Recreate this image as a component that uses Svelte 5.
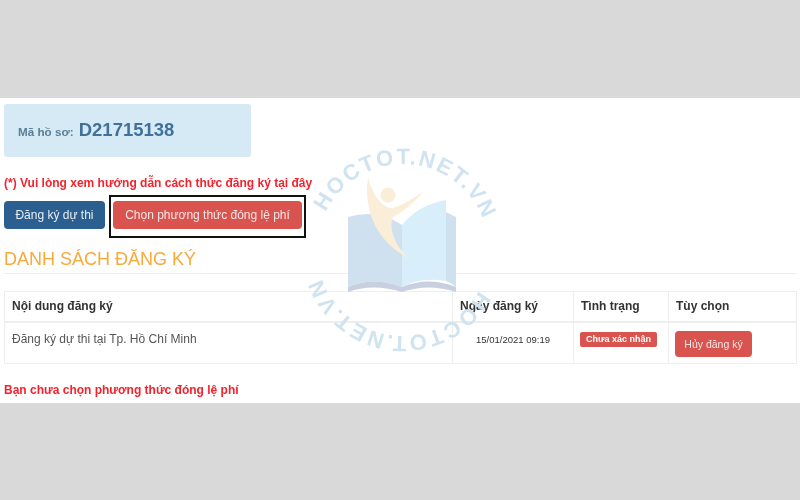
<script>
  const rows = [{ name: 'Đăng ký dự thi tại Tp. Hồ Chí Minh', date: '15/01/2021 09:19', status: 'Chưa xác nhận', action: 'Hủy đăng ký' }];
</script>

<div class="page">
  <main class="panel">
    <div class="content">
      <div class="alert"><span class="label">Mã hồ sơ:</span> <strong>D21715138</strong></div>
      <p class="guide">(*) Vui lòng xem hướng dẫn cách thức đăng ký tại đây</p>
      <div class="actions">
        <button class="btn blue">Đăng ký dự thi</button>
        <div class="focus"><button class="btn red wide">Chọn phương thức đóng lệ phí</button></div>
      </div>
      <h2>DANH SÁCH ĐĂNG KÝ</h2>
      <table>
        <thead>
          <tr><th class="c1">Nội dung đăng ký</th><th class="c2">Ngày đăng ký</th><th class="c3">Tình trạng</th><th>Tùy chọn</th></tr>
        </thead>
        <tbody>
          {#each rows as r}
            <tr>
              <td>{r.name}</td>
              <td class="date">{r.date}</td>
              <td><span class="badge">{r.status}</span></td>
              <td><button class="btn red small">{r.action}</button></td>
            </tr>
          {/each}
        </tbody>
      </table>
      <p class="warn">Bạn chưa chọn phương thức đóng lệ phí</p>
    </div>

    <svg class="mark" viewBox="0 0 220 220" width="220" height="220" aria-hidden="true">
      <defs>
        <path id="arcTop" d="M 24 110 A 86 86 0 0 1 196 110" />
        <path id="arcBot" d="M 196 110 A 86 86 0 0 1 24 110" />
      </defs>
      <path d="M55 77 Q85 68 109 85 L109 147 Q80 136 55 147 Z" fill="#cfe0ef" />
      <path d="M109 85 Q125 65 153 60 L153 141 Q128 137 109 147 Z" fill="#d8eefa" />
      <path d="M153 72 L163 77 L163 147 Q158 143 153 141 Z" fill="#cfe0ef" />
      <path d="M75 38 C70 72 85 102 115 118 C102 105 95 88 100 77 C110 72 122 62 131 51 C118 60 105 68 97 68 C88 66 80 55 75 38 Z" fill="#fbeed8" />
      <circle cx="95" cy="55" r="7.5" fill="#fbeed8" />
      <path d="M55 147 Q80 136 109 147 Q135 136 163 147 L163 152 Q135 143 109 152 Q80 143 55 152 Z" fill="#c8cfdf" />
      <g transform="rotate(3 110 110)">
        <text class="wm"><textPath href="#arcTop" startOffset="50%" text-anchor="middle">HOCTOT.NET.VN</textPath></text>
      </g>
      <g transform="rotate(5 110 110)">
        <text class="wm"><textPath href="#arcBot" startOffset="50%" text-anchor="middle">HOCTOT.NET.VN</textPath></text>
      </g>
    </svg>
  </main>
</div>

<style>
  :global(body) { margin: 0; background: #d9d9d9; }
  .page { width: 800px; height: 500px; padding-top: 98px; box-sizing: border-box; overflow: hidden; font-family: "Liberation Sans", Arial, sans-serif; }
  .panel { position: relative; height: 305px; background: #fff; }
  .content { padding: 6px 3px 0 4px; filter: blur(0.6px); }
  .alert { width: 247px; height: 53px; box-sizing: border-box; padding-left: 14px; display: flex; align-items: center; gap: 5px; background: #d6eaf5; border-radius: 3px; }
  .label { font-size: 11.7px; font-weight: bold; padding-top: 2px; color: #5a8099; }
  .alert strong { font-size: 18.5px; color: #40719a; margin-top: -2px; }
  .guide { margin: 19px 0 0; font-size: 12px; line-height: 14px; font-weight: bold; color: #f5222d; }
  .actions { display: flex; align-items: flex-start; gap: 4px; margin-top: 5px; }
  .btn { border: 0; border-radius: 4px; color: #f3e6e6; font: 12px "Liberation Sans", Arial, sans-serif; padding: 0; }
  .blue { width: 101px; height: 28px; margin-top: 6px; background: #2a5f90; color: #e6edf3; }
  .red { background: #d9534f; }
  .focus { border: 2px solid #111; padding: 4px 2px 7px; display: flex; }
  .wide { width: 189px; height: 28px; }
  h2 { margin: 8px 0 0; padding-bottom: 1px; border-bottom: 1px solid #eee; font-size: 18px; line-height: 26px; font-weight: normal; color: #f9a83a; }
  table { width: 793px; margin-top: 17px; border-collapse: collapse; table-layout: fixed; font-size: 12px; color: #555; }
  th, td { border: 1px solid #eee; padding: 7px; text-align: left; vertical-align: top; }
  th { height: 14px; padding-bottom: 8px; line-height: 14px; font-weight: bold; color: #333; border-bottom-width: 2px; }
  td { height: 22px; padding-top: 9px; padding-bottom: 6px; line-height: 14px; }
  .c1 { width: 433px; }
  .c2 { width: 106px; }
  .c3 { width: 80px; }
  .date { font-size: 9.5px; color: #333; text-align: center; padding-top: 10px; }
  .badge { display: inline-block; padding: 1px 6px; margin: 0 0 0 -1px; background: #d9534f; color: #fff; border-radius: 2px; font-size: 9px; font-weight: bold; line-height: 13px; vertical-align: top; white-space: nowrap; }
  .small { width: 77px; height: 26px; font-size: 10.5px; margin: -1px 0 0 -1px; display: block; }
  .warn { margin: 19px 0 0; font-size: 12px; line-height: 14px; font-weight: bold; color: #f5222d; }
  .mark { position: absolute; left: 293px; top: 42px; filter: blur(0.5px); pointer-events: none; }
  .wm { font: bold 22px "Liberation Sans", Arial, sans-serif; fill: #cfe3f1; letter-spacing: 2px; }
</style>
